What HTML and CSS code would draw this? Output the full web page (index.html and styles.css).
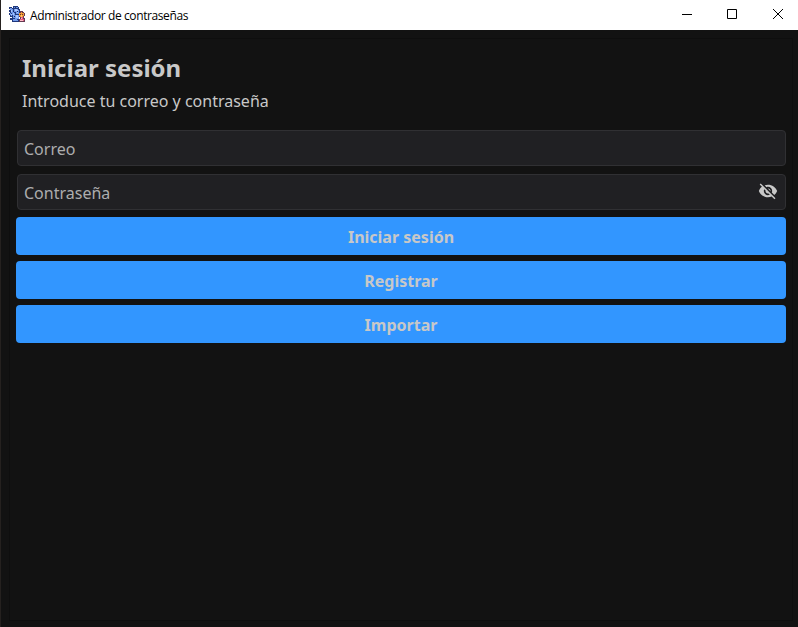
FILE: index.html
```html
<!DOCTYPE html>
<html lang="es">
<head>
<meta charset="utf-8">
<title>Administrador de contraseñas</title>
<link rel="stylesheet" href="styles.css">
</head>
<body>
<header class="titlebar">
  <svg class="app-icon" width="16" height="16" viewBox="0 0 16 16" shape-rendering="crispEdges">
    <path d="M0 1h3v1h1V0h5v1h1v2h1v7h-1v6H3v-2H1v-2h2v-1H1V9H0V7h1V6H0V4h1V3H0z" fill="#20387c"/>
    <path d="M1 2h2v1h1v2h1v2h1v2h4v4H8v1H6v-2H4V9H3V7H2V4H1zM5 3h4v1h1v4H7V6H5zM1 7h1v1h1v2H2V9H1zM4 13h2v1h3v1H4z" fill="#729bec"/>
    <path d="M6 3h2v1h1v3H8V5H6zM2 4h1v2H2zM4 7h1v2H4zM7 9h2v3H7zM2 8h1v1H2z" fill="#a9c6ff"/>
    <path d="M5 1h1v1H5zM7 1h2v1H7z" fill="#6591df"/>
    <path d="M8 5h1v1H8zM4 5h1v1H4zM5 10h1v1H5z" fill="#17265c"/>
    <path d="M11 5h3v1h1v1h1v3h-1v2h1v4h-6v-3h1v-2h-1V7h1z" fill="#643b52"/>
    <path d="M12 6h1v1h2v3h-1v1h-3v-1h-1V7h2z" fill="#f49a35"/>
    <path d="M11 8h1v1h-1zM13 8h1v1h-1z" fill="#653b37"/>
    <path d="M12 9h1v2h-1z" fill="#ffcc65"/>
    <path d="M12 11h2v2h1v2h-4v-2h1z" fill="#e65b83"/>
    <path d="M12 12h1v1h-1zM11 14h3v1h-3z" fill="#ffbdc8"/>
  </svg>
  <span class="app-name">Administrador de contraseñas</span>
  <div class="controls">
    <svg width="45" height="29" viewBox="0 0 45 29"><path d="M17 14.500h10"/></svg>
    <svg width="46" height="29" viewBox="0 0 46 29"><path d="M17.500 9.500h9v9h-9z"/></svg>
    <svg width="46" height="29" viewBox="0 0 46 29"><path d="M17 9l10 10M27 9L17 19"/></svg>
  </div>
</header>
<main class="window">
  <section class="panel">
    <h1>Iniciar sesión</h1>
    <p>Introduce tu correo y contraseña</p>
    <form>
      <div class="field">Correo</div>
      <div class="field">Contraseña<svg class="eye" viewBox="0 0 24 24"><path d="M12 7c2.760 0 5 2.240 5 5 0 .65-.13 1.260-.36 1.830l2.920 2.920c1.510-1.260 2.700-2.890 3.430-4.750-1.730-4.390-6-7.500-11-7.500-1.400 0-2.740.25-3.980.7l2.160 2.160C10.740 7.130 11.350 7 12 7zM2 4.270l2.740 2.740C3.080 8.300 1.780 10.020 1 12c1.730 4.390 6 7.500 11 7.500 1.550 0 3.030-.3 4.380-.84l3.350 3.340L21 20.730 3.270 3 2 4.270zM7.530 9.800l1.550 1.550A2.800 2.800 0 0 0 9 12c0 1.660 1.340 3 3 3 .22 0 .44-.03.65-.08l1.550 1.550A5 5 0 0 1 7.530 9.800zm4.310-.78 3.150 3.150.02-.16c0-1.660-1.340-3-3-3z"/></svg></div>
      <button type="button">Iniciar sesión</button>
      <button type="button">Registrar</button>
      <button type="button">Importar</button>
    </form>
  </section>
</main>
</body>
</html>
```
FILE: styles.css
```css
* { box-sizing: border-box; }
body { margin: 0; height: 627px; overflow: hidden; background: #121212; color: #c8c8c8; font-family: "Noto Sans", sans-serif; border-left: 1px solid #25211f; }
.titlebar { height: 30px; background: #fff; display: flex; align-items: center; padding: 0 0 1px 8px; color: #000; }
.app-icon { margin: 0 5px 1px 0; }
.app-name { font: 12px "Open Sans", sans-serif; letter-spacing: -0.4px; padding-top: 1px; }
.controls { margin-left: auto; display: flex; height: 29px; align-self: flex-start; margin-right: -4px; }
.controls svg { display: block; }
.controls path { fill: none; stroke: #000; stroke-width: 1; }
.window { height: 597px; padding: 8px 5px 6px 8px; }
.panel { height: 100%; border: 1px solid #0e0e0e; padding: 11px 6px 0; }
h1 { margin: 0 6px; font-size: 24px; line-height: 36px; }
p { margin: 3px 6px 0; font-size: 16px; line-height: 24px; }
form { display: flex; flex-direction: column; gap: 6px; margin-top: 16px; }
.field { height: 36px; margin: 1px 0 1px 1px; padding: 1px 7px 0 6px; border: 1px solid #303033; border-radius: 4px; background: #202023; display: flex; align-items: center; justify-content: space-between; font-size: 16px; color: #adadae; }
.eye { width: 20px; height: 20px; margin-bottom: 4px; fill: #c8c8c8; }
button { height: 38px; padding: 2px 6px 0; border: 0; border-radius: 4px; background: #3296ff; color: #c8c8c8; font: bold 16px "Noto Sans", sans-serif; }
```
